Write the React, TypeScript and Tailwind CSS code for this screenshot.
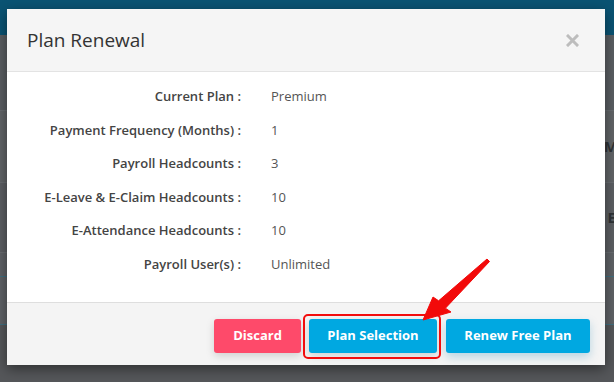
const rows: [string, string][] = [
  ["Current Plan :", "Premium"],
  ["Payment Frequency (Months) :", "1"],
  ["Payroll Headcounts :", "3"],
  ["E-Leave & E-Claim Headcounts :", "10"],
  ["E-Attendance Headcounts :", "10"],
  ["Payroll User(s) :", "Unlimited"],
];

function Backdrop() {
  return (
    <div className="flex h-full w-full flex-col bg-[#5d6165]">
      <div className="h-[35px] bg-[#0a5373]" />
      <div className="h-[76px] border-b border-[#686c70] bg-[#5a5e62]" />
      <div className="flex h-[72px] items-center justify-end border-b border-[#686c70] bg-[#616467] text-[15px] font-bold text-[#2f3336]">
        <span className="-mr-[4px]">M</span>
      </div>
      <div className="flex h-[70px] items-center justify-end border-b border-[#686c70] bg-[#5c5f63] text-[15px] font-bold text-[#2f3336]">
        <span className="-mr-[2px]">E</span>
      </div>
      <div className="h-[24px] border-b border-[#3f6f80] bg-[#5f6266]" />
      <div className="h-[48px] border-b border-[#3f6f80] bg-[#5f6266]" />
      <div className="flex-1 bg-[#55575a]" />
    </div>
  );
}

function Modal() {
  return (
    <div className="absolute left-[7px] top-[9px] flex h-[356px] w-[598px] flex-col bg-white shadow-[0_4px_12px_rgba(0,0,0,0.45)]">
      <div className="flex h-[63px] items-center justify-between border-b border-[#e3e3e3] bg-[#f5f5f5] pl-[20px] pr-[26px]">
        <h1 className="text-[19px] font-medium text-[#333]">Plan Renewal</h1>
        <svg width="13" height="13" viewBox="0 0 13 13" className="mt-[1px]">
          <path d="M2 2 L11 11 M11 2 L2 11" stroke="#bdbdbd" strokeWidth="3" strokeLinecap="square" />
        </svg>
      </div>
      <div className="flex flex-col pb-[20px] pt-[8px]">
        {rows.map(([label, value]) => (
          <div key={label} className="grid h-[33.6px] grid-cols-[234px_1fr] items-center gap-[30px] text-[13px]">
            <span className="text-right font-semibold text-[#444]">{label}</span>
            <span className="text-[#555]">{value}</span>
          </div>
        ))}
      </div>
      <div className="flex flex-1 items-start justify-end gap-[8px] border-t border-[#dedede] bg-[#f4f4f4] pr-[15px] pt-[16px] text-[13px] font-bold text-white">
        <button className="h-[34px] w-[87px] rounded-[3px] bg-[#fe4a6a] shadow-[0_3px_8px_rgba(0,0,0,0.15)]">Discard</button>
        <div className="relative">
          <button className="h-[34px] w-[128px] rounded-[3px] bg-[#00a8e1] shadow-[0_3px_8px_rgba(0,0,0,0.15)]">Plan Selection</button>
          <span className="absolute -bottom-[6px] -left-[6px] -right-[4px] -top-[5px] rounded-[5px] border-2 border-[#f20d0d]" />
        </div>
        <button className="ml-[1px] h-[34px] w-[144px] rounded-[3px] bg-[#00a8e1] shadow-[0_4px_10px_rgba(0,120,170,0.25)]">Renew Free Plan</button>
      </div>
    </div>
  );
}

function Arrow() {
  return (
    <svg className="absolute left-0 top-0" width="614" height="382" viewBox="0 0 614 382">
      <path
        d="M487 259 L489.5 261.5 L445.4 308.2 L451 312 L423 320 L433 297 L438.6 300.8 Z"
        fill="#f20a0a"
        stroke="#f20a0a"
        strokeWidth="1"
        strokeLinejoin="round"
      />
    </svg>
  );
}

export default function App() {
  return (
    <div className="relative h-[382px] w-[614px] overflow-hidden font-['Open_Sans',sans-serif]">
      <Backdrop />
      <Modal />
      <Arrow />
    </div>
  );
}
